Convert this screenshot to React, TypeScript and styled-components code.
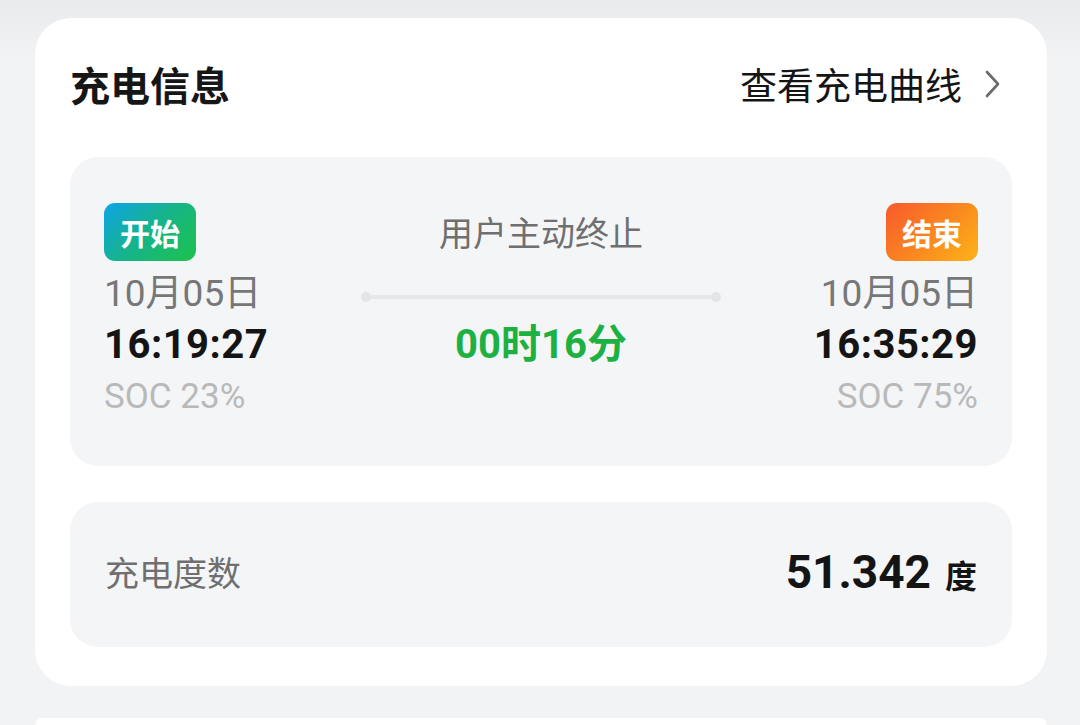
import styled, { createGlobalStyle } from 'styled-components';

const GlobalStyle = createGlobalStyle`
  html, body {
    margin: 0;
    padding: 0;
    background: linear-gradient(180deg, #e9eaec 0px, #f2f3f5 60px, #f2f3f5 100%);
    font-family: Roboto, "Noto Sans", "Noto Sans CJK SC", sans-serif;
  }
`;

type EndKind = 'start' | 'end';

interface EndpointProps {
  label: string;
  kind: EndKind;
  date: string;
  time: string;
  soc: string;
}

const Endpoint = ({ label, kind, date, time, soc }: EndpointProps) => (
  <EndColumn kind={kind}>
    <Badge kind={kind}>{label}</Badge>
    <DateText>{date}</DateText>
    <TimeText>{time}</TimeText>
    <SocText>{soc}</SocText>
  </EndColumn>
);

const Chevron = () => (
  <svg width="18" height="30" viewBox="0 0 18 30" fill="none">
    <path
      d="M3 3 L14 15 L3 27"
      stroke="#6b6b6b"
      strokeWidth="2.6"
      strokeLinecap="round"
      strokeLinejoin="round"
    />
  </svg>
);

export default function App() {
  return (
    <>
      <GlobalStyle />
      <Page>
        <Card>
          <Header>
            <Title>充电信息</Title>
            <CurveLink>
              查看充电曲线
              <Chevron />
            </CurveLink>
          </Header>

          <TimelineBox>
            <Endpoint
              kind="start"
              label="开始"
              date="10月05日"
              time="16:19:27"
              soc="SOC 23%"
            />
            <MiddleColumn>
              <Reason>用户主动终止</Reason>
              <Track>
                <TrackDot />
                <TrackBar />
                <TrackDot />
              </Track>
              <Duration>00时16分</Duration>
            </MiddleColumn>
            <Endpoint
              kind="end"
              label="结束"
              date="10月05日"
              time="16:35:29"
              soc="SOC 75%"
            />
          </TimelineBox>

          <EnergyBox>
            <EnergyLabel>充电度数</EnergyLabel>
            <EnergyValue>
              51.342<EnergyUnit>度</EnergyUnit>
            </EnergyValue>
          </EnergyBox>
        </Card>
        <NextCard />
      </Page>
    </>
  );
}

const Page = styled.div`
  height: 725px;
  box-sizing: border-box;
  overflow: hidden;
  padding: 18px 33px 0 35px;
  display: flex;
  flex-direction: column;
  gap: 32px;
`;

const Card = styled.div`
  background: #ffffff;
  border-radius: 36px;
  padding: 41px 35px 39px 35px;
  display: flex;
  flex-direction: column;
`;

const NextCard = styled.div`
  background: #ffffff;
  border-radius: 36px 36px 0 0;
  flex: 1;
`;

const Header = styled.div`
  display: flex;
  align-items: center;
  justify-content: space-between;
  height: 50px;
  margin-bottom: 48px;
`;

const Title = styled.div`
  font-family: "Noto Sans CJK SC", sans-serif;
  font-size: 40px;
  font-weight: 700;
  color: #161616;
`;

const CurveLink = styled.div`
  display: flex;
  align-items: center;
  gap: 22px;
  font-family: "Noto Sans CJK SC", sans-serif;
  font-size: 37px;
  color: #141414;
  padding-right: 10px;
`;

const TimelineBox = styled.div`
  background: #f4f5f7;
  border-radius: 28px;
  height: 309px;
  box-sizing: border-box;
  padding: 46px 34px 0 34px;
  display: flex;
  justify-content: space-between;
`;

const EndColumn = styled.div<{ kind: EndKind }>`
  display: flex;
  flex-direction: column;
  align-items: ${({ kind }) => (kind === 'start' ? 'flex-start' : 'flex-end')};
`;

const Badge = styled.div<{ kind: EndKind }>`
  width: 92px;
  height: 58px;
  border-radius: 11px;
  display: flex;
  align-items: center;
  justify-content: center;
  font-family: "Noto Sans CJK SC", sans-serif;
  font-size: 30px;
  font-weight: 700;
  color: #ffffff;
  background: ${({ kind }) =>
    kind === 'start'
      ? 'linear-gradient(135deg, #0ea4e6 0%, #16b488 50%, #1ec24c 100%)'
      : 'linear-gradient(135deg, #f8592c 0%, #fa8a1f 55%, #fdb418 100%)'};
  margin-bottom: 7px;
`;

const DateText = styled.div`
  font-family: Roboto, "Noto Sans CJK SC", sans-serif;
  font-size: 37px;
  color: #777777;
  line-height: 52px;
`;

const TimeText = styled.div`
  font-family: Roboto, "Noto Sans CJK SC", sans-serif;
  font-size: 40px;
  font-weight: 700;
  color: #141414;
  line-height: 50px;
  letter-spacing: 0.5px;
`;

const SocText = styled.div`
  font-family: Roboto, "Noto Sans CJK SC", sans-serif;
  font-size: 35px;
  color: #b9b9b9;
  line-height: 54px;
`;

const MiddleColumn = styled.div`
  flex: 1;
  display: flex;
  flex-direction: column;
  align-items: center;
`;

const Reason = styled.div`
  font-family: "Noto Sans CJK SC", sans-serif;
  font-size: 34px;
  color: #6f6f6f;
  height: 58px;
  line-height: 58px;
  margin-bottom: 7px;
`;

const Track = styled.div`
  width: 360px;
  height: 52px;
  padding-top: 5px;
  box-sizing: border-box;
  display: flex;
  align-items: center;
`;

const TrackDot = styled.div`
  width: 10px;
  height: 10px;
  border-radius: 50%;
  background: #e3e4e6;
  flex-shrink: 0;
`;

const TrackBar = styled.div`
  flex: 1;
  height: 4px;
  background: #e6e7e9;
`;

const Duration = styled.div`
  font-family: Roboto, "Noto Sans CJK SC", sans-serif;
  font-size: 40px;
  font-weight: 700;
  color: #1cb142;
  line-height: 50px;
`;

const EnergyBox = styled.div`
  margin-top: 36px;
  background: #f4f5f7;
  border-radius: 28px;
  height: 145px;
  box-sizing: border-box;
  padding: 0 35px 6px 35px;
  display: flex;
  align-items: center;
  justify-content: space-between;
`;

const EnergyLabel = styled.div`
  font-family: "Noto Sans CJK SC", sans-serif;
  font-size: 34px;
  color: #6f6f6f;
`;

const EnergyValue = styled.div`
  font-family: Roboto, "Noto Sans CJK SC", sans-serif;
  font-size: 46px;
  font-weight: 700;
  color: #141414;
  display: flex;
  align-items: baseline;
  gap: 14px;
`;

const EnergyUnit = styled.span`
  font-family: "Noto Sans CJK SC", sans-serif;
  font-size: 32px;
  font-weight: 700;
`;
